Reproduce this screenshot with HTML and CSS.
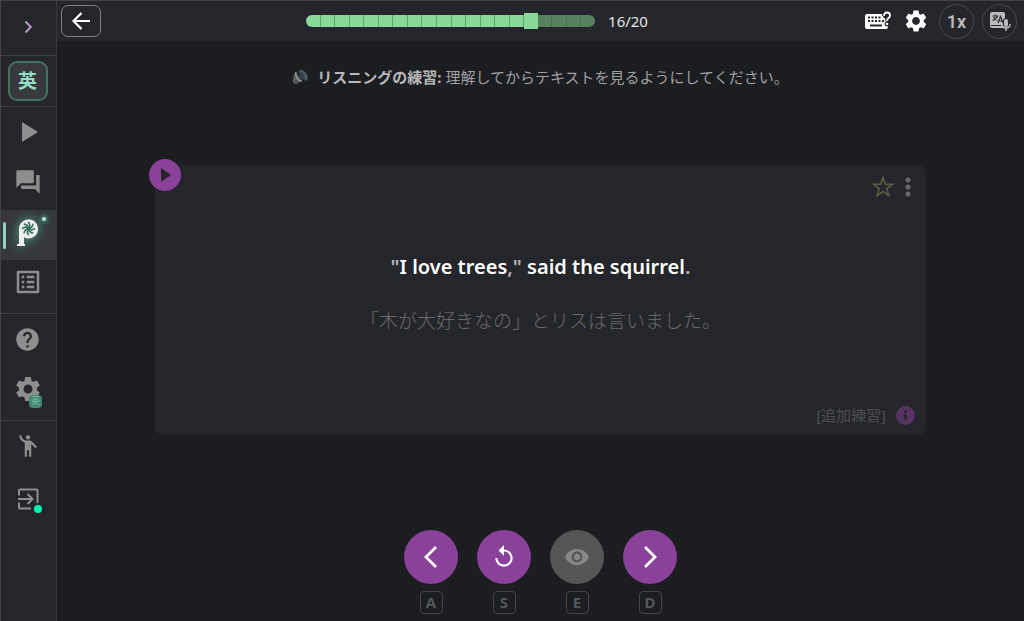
FILE: index.html
```html
<!DOCTYPE html>
<html lang="ja">
	<head>
		<meta charset="UTF-8" />
		<meta name="viewport" content="width=device-width, initial-scale=1.0" />
		<title>リスニングの練習</title>
		<link rel="stylesheet" href="styles.css">
	</head>
	<body>
		<div class="app">
			<nav class="sidebar">
				<div class="side-group side-toggle">
					<button type="button" class="side-item" aria-label="メニューを開く">
						<svg width="24" height="24" viewBox="0 0 24 24"><path d="M9.500 6.500l5.300 5.500-5.300 5.500" fill="none" stroke="#b79cc4" stroke-width="2" /></svg>
					</button>
				</div>
				<div class="side-group side-lang">
					<button type="button" class="lang-btn">英</button>
				</div>
				<div class="side-group">
					<a href="#play" class="side-item" aria-label="再生">
						<svg width="24" height="24" viewBox="0 0 24 24"><path d="M6 2l16 10L6 22z" /></svg>
					</a>
					<a href="#chat" class="side-item" aria-label="チャット">
						<svg width="28" height="28" viewBox="0 0 24 24"><path d="M21 6h-2v9H6v2c0 .55.45 1 1 1h11l4 4V7c0-.55-.45-1-1-1zm-4 6V3c0-.55-.45-1-1-1H3c-.55 0-1 .45-1 1v14l4-4h10c.55 0 1-.45 1-1z" /></svg>
					</a>
					<a href="#practice" class="side-item active" aria-label="練習">
						<svg class="logo" width="32" height="32" viewBox="0 0 32 32">
							<path d="M7 13a9.500 9.500 0 1 1 5 8.300V28h1v2H5v-2h2z" fill="#eee" />
							<g fill="none" stroke="#37705f" stroke-width="1.600" stroke-linecap="round">
								<path id="blade" d="M16.500 12.500q2.500-2.500.2-6" />
								<use href="#blade" transform="rotate(45 16.500 12.500)" />
								<use href="#blade" transform="rotate(90 16.500 12.500)" />
								<use href="#blade" transform="rotate(135 16.500 12.500)" />
								<use href="#blade" transform="rotate(180 16.500 12.500)" />
								<use href="#blade" transform="rotate(225 16.500 12.500)" />
								<use href="#blade" transform="rotate(270 16.500 12.500)" />
								<use href="#blade" transform="rotate(315 16.500 12.500)" />
							</g>
						</svg>
						<span class="spark"></span>
					</a>
					<a href="#list" class="side-item" aria-label="リスト">
						<svg width="30" height="30" viewBox="0 0 24 24"><path d="M19 5v14H5V5h14m1.100-2H3.900c-.5 0-.9.4-.9.900v16.200c0 .4.400.9.900.9h16.200c.4 0 .9-.5.900-.9V3.900c0-.5-.5-.9-.9-.9zM11 7h6v2h-6V7zm0 4h6v2h-6v-2zm0 4h6v2h-6zM7 7h2v2H7zm0 4h2v2H7zm0 4h2v2H7z" /></svg>
					</a>
				</div>
				<div class="side-group">
					<a href="#help" class="side-item" aria-label="ヘルプ">
						<svg width="27" height="27" viewBox="0 0 24 24"><path d="M12 2C6.480 2 2 6.480 2 12s4.480 10 10 10 10-4.480 10-10S17.520 2 12 2zm1 17h-2v-2h2v2zm2.070-7.750l-.9.920C13.450 12.900 13 13.500 13 15h-2v-.5c0-1.100.45-2.100 1.170-2.830l1.240-1.260c.37-.36.59-.86.59-1.410 0-1.100-.9-2-2-2s-2 .9-2 2H8c0-2.210 1.790-4 4-4s4 1.790 4 4c0 .88-.36 1.680-.93 2.250z" /></svg>
					</a>
					<a href="#settings" class="side-item" aria-label="設定">
						<svg width="30" height="30" viewBox="0 0 24 24"><path d="M19.140 12.940c.04-.3.060-.61.060-.94 0-.32-.02-.64-.07-.94l2.030-1.580c.18-.14.23-.41.120-.61l-1.920-3.320c-.12-.22-.37-.29-.59-.22l-2.390.96c-.5-.38-1.030-.7-1.620-.94l-.36-2.540c-.04-.24-.24-.41-.48-.41h-3.840c-.24 0-.43.17-.47.410l-.36 2.540c-.59.24-1.130.57-1.620.94l-2.390-.96c-.22-.08-.47 0-.59.220L2.740 8.870c-.12.21-.08.47.120.61l2.030 1.580c-.05.3-.09.63-.09.940s.02.64.070.94l-2.030 1.580c-.18.14-.23.41-.12.610l1.920 3.320c.12.22.37.29.59.22l2.390-.96c.5.38 1.030.7 1.620.94l.36 2.540c.05.24.24.41.480.41h3.840c.24 0 .44-.17.470-.41l.36-2.540c.59-.24 1.130-.56 1.620-.94l2.390.96c.22.08.47 0 .59-.22l1.920-3.320c.12-.22.070-.47-.12-.61l-2.010-1.580zM12 15.600c-1.980 0-3.600-1.620-3.600-3.600s1.620-3.600 3.600-3.600 3.600 1.620 3.600 3.600-1.620 3.600-3.600 3.600z" /></svg>
						<span class="lang-badge">英</span>
					</a>
				</div>
				<div class="side-group side-account">
					<a href="#community" class="side-item" aria-label="コミュニティ">
						<svg width="26" height="26" viewBox="0 0 24 24"><circle cx="12" cy="4" r="2" /><path d="M15.890 8.110C15.500 7.720 14.830 7 13.530 7h-2.540C8.240 6.990 6 4.750 6 2H4c0 3.160 2.110 5.840 5 6.710V22h2v-6h2v6h2V10.050L18.950 14l1.410-1.410z" /></svg>
					</a>
					<a href="#login" class="side-item" aria-label="ログイン">
						<svg width="24" height="24" viewBox="0 0 24 24"><path d="M3 8.500V3.500q0-1 1-1h16.500q1 0 1 1V16M3 15.500v5q0 1 1 1h11M2 12h14M11.500 7l5 5-5 5" fill="none" stroke="#8e8e8e" stroke-width="2" /></svg>
						<span class="status-dot"></span>
					</a>
				</div>
			</nav>
			<main class="main">
				<header class="topbar">
					<button type="button" class="back-btn" aria-label="戻る">
						<svg width="24" height="24" viewBox="0 0 24 24"><path d="M21 12H4.500M12.500 4L4.500 12l8 8" fill="none" stroke="#fff" stroke-width="2.200" /></svg>
					</button>
					<div class="progress-wrap">
						<div class="progress" role="progressbar" aria-label="進捗" aria-valuemin="0" aria-valuemax="20" aria-valuenow="16">
							<span class="done"></span><span class="done"></span><span class="done"></span><span class="done"></span><span class="done"></span>
							<span class="done"></span><span class="done"></span><span class="done"></span><span class="done"></span><span class="done"></span>
							<span class="done"></span><span class="done"></span><span class="done"></span><span class="done"></span><span class="done"></span>
							<span class="current"></span><span></span><span></span><span></span><span></span>
						</div>
						<span class="count">16/20</span>
					</div>
					<div class="tools">
						<button type="button" class="tool-btn" aria-label="キーボードショートカット">
							<svg width="26" height="20" viewBox="0 0 26 20">
								<path d="M2 3h15.500q0 4 3.500 5v3h2v5q0 2-2 2H2q-2 0-2-2V5q0-2 2-2z" fill="#fff" />
								<path d="M3 6.500h2M6.500 6.500h2M10 6.500h2M13.500 6.500h2M3 10h2M6.500 10h2M10 10h2M13.500 10h2M17 10h2M5 14.500h12" stroke="#25262b" stroke-width="1.800" />
								<path d="M19 5q0-3.500 3-3.500t3 3q0 1.500-1.500 2.500T22 10" fill="none" stroke="#25262b" stroke-width="4" />
								<circle cx="22" cy="13" r="2.500" fill="#25262b" />
								<path d="M19 5q0-3.500 3-3.500t3 3q0 1.500-1.500 2.500T22 10" fill="none" stroke="#fff" stroke-width="1.800" />
								<circle cx="22" cy="13" r="1.300" fill="#fff" />
							</svg>
						</button>
						<button type="button" class="tool-btn" aria-label="設定">
							<svg width="26" height="26" viewBox="0 0 24 24"><path fill="#fff" d="M19.140 12.940c.04-.3.060-.61.060-.94 0-.32-.02-.64-.07-.94l2.030-1.580c.18-.14.23-.41.120-.61l-1.920-3.320c-.12-.22-.37-.29-.59-.22l-2.390.96c-.5-.38-1.030-.7-1.620-.94l-.36-2.540c-.04-.24-.24-.41-.48-.41h-3.840c-.24 0-.43.17-.47.410l-.36 2.540c-.59.24-1.130.57-1.620.94l-2.390-.96c-.22-.08-.47 0-.59.220L2.740 8.870c-.12.21-.08.47.120.61l2.030 1.580c-.05.3-.09.63-.09.940s.02.64.070.94l-2.030 1.580c-.18.14-.23.41-.12.610l1.920 3.320c.12.22.37.29.59.22l2.390-.96c.5.38 1.030.7 1.620.94l.36 2.540c.05.24.24.41.480.41h3.840c.24 0 .44-.17.470-.41l.36-2.540c.59-.24 1.130-.56 1.620-.94l2.390.96c.22.08.47 0 .59-.22l1.920-3.320c.12-.22.070-.47-.12-.61l-2.010-1.580zM12 15.600c-1.980 0-3.600-1.620-3.600-3.600s1.620-3.600 3.600-3.600 3.600 1.620 3.600 3.600-1.620 3.600-3.600 3.600z" /></svg>
						</button>
						<button type="button" class="round-btn">1x</button>
						<button type="button" class="round-btn" aria-label="翻訳と音声">
							<svg width="22" height="22" viewBox="0 0 22 22">
								<path d="M3 2h11q2 0 2 2v14H3q-2 0-2-2V4q0-2 2-2z" fill="#bbb" />
								<path d="M3.500 6h6M6.500 4.500V6M8.500 6q-1 3-5 4.500M4.500 7q1.500 2.500 4 3.500M9 13l2.500-6.500L14 13M10 11h3M2 15.500h11" fill="none" stroke="#2a2b30" stroke-width="1.200" />
								<rect x="14" y="8" width="6" height="10" rx="3" fill="#25262b" />
								<rect x="15" y="9" width="4" height="8" rx="2" fill="#bbb" />
								<path d="M13 14q0 4 4 4t4-4M17 18v3" fill="none" stroke="#bbb" stroke-width="1.500" />
							</svg>
						</button>
					</div>
				</header>
				<p class="hint">
					<svg width="16" height="16" viewBox="0 0 16 16">
						<path d="M6 2q5-2 8 2t1 8q-3 0-6-3z" fill="#34434b" />
						<path d="M7 2q6 0 7 9M9 1q6 2 6 9" fill="none" stroke="#4f6873" />
						<path d="M1 8q0-3 3-5l6 8q-3 3-7 2-2-2-2-5z" fill="#4d5356" />
						<path d="M4 3q-1 3 1 6t5 3" fill="none" stroke="#9a9fa2" stroke-width="1.400" />
						<circle cx="4" cy="12" r="2.500" fill="none" stroke="#777c80" />
					</svg>
					<span><strong>リスニングの練習:</strong> 理解してからテキストを見るようにしてください。</span>
				</p>
				<section class="card">
					<button type="button" class="play-btn" aria-label="再生">
						<svg width="12" height="16" viewBox="0 0 12 16"><path d="M1 1l10 7-10 7z" fill="#25262b" /></svg>
					</button>
					<div class="card-top">
						<button type="button" class="icon-btn" aria-label="お気に入り">
							<svg width="24" height="24" viewBox="0 0 24 24"><path d="M12 2.500l2.300 6.800h7.200l-5.800 4.300 2.200 7-5.900-4.200-5.900 4.200 2.200-7-5.800-4.300h7.200z" fill="none" stroke="#5e5b45" stroke-width="1.600" /></svg>
						</button>
						<button type="button" class="icon-btn" aria-label="その他">
							<svg width="6" height="20" viewBox="0 0 6 20" fill="#67686c"><circle cx="3" cy="3" r="2.500" /><circle cx="3" cy="10" r="2.500" /><circle cx="3" cy="17" r="2.500" /></svg>
						</button>
					</div>
					<p class="sentence" lang="en"><span>"</span>I love trees<span>,"</span> said the squirrel<span>.</span></p>
					<p class="translation">「木が大好きなの」とリスは言いました。</p>
					<div class="card-bottom">
						<span>[追加練習]</span>
						<button type="button" class="icon-btn" aria-label="情報">
							<svg width="19" height="19" viewBox="0 0 20 20"><circle cx="10" cy="10" r="10" fill="#553363" /><path d="M9 5h2v2H9zM8 9h3v5H9v-4H8zM8 14h4" fill="#25262b" stroke="#25262b" stroke-width=".5" /></svg>
						</button>
					</div>
				</section>
				<div class="controls">
					<div class="control">
						<button type="button" class="circle-btn" aria-label="前へ">
							<svg width="26" height="26" viewBox="0 0 26 26"><path d="M18 3L8 13l10 10" fill="none" stroke="#fff" stroke-width="2.800" /></svg>
						</button>
						<kbd>A</kbd>
					</div>
					<div class="control">
						<button type="button" class="circle-btn" aria-label="もう一度">
							<svg width="26" height="26" viewBox="0 0 24 24"><path d="M12 5V1L7 6l5 5V7c3.310 0 6 2.690 6 6s-2.690 6-6 6-6-2.690-6-6H4c0 4.420 3.580 8 8 8s8-3.580 8-8-3.580-8-8-8z" fill="#fff" /></svg>
						</button>
						<kbd>S</kbd>
					</div>
					<div class="control">
						<button type="button" class="circle-btn muted" aria-label="表示">
							<svg width="26" height="26" viewBox="0 0 24 24"><path d="M12 4.500C7 4.500 2.730 7.610 1 12c1.730 4.390 6 7.500 11 7.500s9.270-3.110 11-7.500c-1.730-4.390-6-7.500-11-7.500zM12 17c-2.760 0-5-2.240-5-5s2.240-5 5-5 5 2.240 5 5-2.240 5-5 5zm0-8c-1.660 0-3 1.340-3 3s1.340 3 3 3 3-1.340 3-3-1.340-3-3-3z" fill="#888" /></svg>
						</button>
						<kbd>E</kbd>
					</div>
					<div class="control">
						<button type="button" class="circle-btn" aria-label="次へ">
							<svg width="26" height="26" viewBox="0 0 26 26"><path d="M8 3l10 10L8 23" fill="none" stroke="#fff" stroke-width="2.800" /></svg>
						</button>
						<kbd>D</kbd>
					</div>
				</div>
			</main>
		</div>
	</body>
</html>
```
FILE: styles.css
```css
* {
	box-sizing: border-box;
}
body {
	margin: 0;
	background: #1c1d20;
	color: #aaa;
	font-family: "Noto Sans", "Noto Sans CJK JP", sans-serif;
}
button {
	padding: 0;
	border: none;
	background: none;
	color: inherit;
	font-family: inherit;
	cursor: pointer;
}
p {
	margin: 0;
}
svg {
	display: block;
}
.app {
	display: flex;
	min-height: 100vh;
	border-top: 1px solid #434447;
}
.sidebar {
	flex: none;
	width: 57px;
	background: #25262b;
	border-left: 1px solid #434447;
	border-right: 1px solid #38393d;
}
.side-group {
	padding: 3px 0;
	border-bottom: 1px solid #3d3e42;
}
.side-group:last-child {
	border-bottom: none;
}
.side-toggle {
	padding: 4px 0 0;
}
.side-lang {
	display: flex;
	justify-content: center;
	padding: 5px 2px 5px 0;
}
.side-account {
	display: grid;
	gap: 3px;
}
.side-item {
	position: relative;
	display: flex;
	align-items: center;
	justify-content: center;
	width: 100%;
	height: 50px;
	padding: 0 2px 6px 0;
	fill: #8e8e8e;
}
.side-item.active {
	background: #36373c;
}
.side-item.active::before {
	content: "";
	position: absolute;
	left: 2px;
	top: 12px;
	width: 3px;
	height: 27px;
	border-radius: 2px;
	background: #8fd3c2;
}
.logo {
	filter: drop-shadow(0 0 6px #4da88c);
}
.spark {
	position: absolute;
	top: 7px;
	right: 10px;
	width: 4px;
	height: 4px;
	border-radius: 50%;
	background: #a5eed6;
	box-shadow: 0 0 4px 1px #4da88c;
}
.lang-btn {
	width: 40px;
	height: 40px;
	border: 2px solid #44705f;
	border-radius: 9px;
	background: #38393e;
	color: #93dcc4;
	font-size: 19px;
	font-weight: 700;
	line-height: 24px;
}
.lang-badge {
	position: absolute;
	right: 14px;
	bottom: 9px;
	width: 13px;
	height: 13px;
	border-radius: 4px;
	background: #438873;
	color: #83bda9;
	font-size: 9px;
	line-height: 12px;
	text-align: center;
}
.status-dot {
	position: absolute;
	right: 14px;
	bottom: 14px;
	width: 8px;
	height: 8px;
	border-radius: 50%;
	background: #00f5b0;
}
.main {
	display: flex;
	flex: 1;
	flex-direction: column;
	min-width: 0;
}
.topbar {
	display: grid;
	grid-template-columns: 1fr auto 1fr;
	align-items: center;
	height: 40px;
	padding: 0 7px 0 4px;
	background: #25262b;
}
.back-btn {
	display: flex;
	align-items: center;
	justify-content: center;
	width: 40px;
	height: 32px;
	border: 1px solid #808084;
	border-radius: 7px;
}
.progress-wrap {
	display: flex;
	align-items: center;
	gap: 13px;
	margin-right: 124px;
}
.progress {
	display: flex;
	align-items: center;
	width: 289px;
}
.progress span {
	flex: 1;
	height: 12px;
	border-right: 1px solid #477253;
	background: #56805f;
}
.progress .done {
	border-right-color: #61a372;
	background: #8ad998;
}
.progress .current {
	height: 16px;
	border: none;
	background: #8ad998;
}
.progress span:first-child {
	border-radius: 6px 0 0 6px;
}
.progress span:last-child {
	border-right: none;
	border-radius: 0 6px 6px 0;
}
.count {
	color: #e4e4e4;
	font-size: 15px;
	line-height: 20px;
}
.tools {
	display: flex;
	align-items: center;
	justify-content: flex-end;
	gap: 8px;
}
.tool-btn {
	padding: 0 2px;
}
.round-btn {
	display: flex;
	align-items: center;
	justify-content: center;
	width: 35px;
	height: 35px;
	border: 1px solid #48494d;
	border-radius: 50%;
	color: #bbb;
	font-family: Roboto, sans-serif;
	font-size: 18px;
	font-weight: 600;
}
.hint {
	display: flex;
	align-items: center;
	justify-content: center;
	gap: 9px;
	padding: 24px 0 26px;
	color: #a0a0a2;
	font-size: 15px;
	line-height: 24px;
}
.hint strong {
	color: #b8b8ba;
}
.card {
	position: relative;
	margin: 50px 98px 24px;
	padding: 10px 10px 8px;
	border-radius: 8px;
	background: #25262b;
	text-align: center;
}
.play-btn {
	position: absolute;
	left: -6px;
	top: -6px;
	display: flex;
	align-items: center;
	justify-content: center;
	width: 32px;
	height: 32px;
	padding-left: 2px;
	border-radius: 50%;
	background: #894199;
}
.card-top,
.card-bottom {
	display: flex;
	align-items: center;
	justify-content: flex-end;
	gap: 10px;
	height: 24px;
}
.card-top {
	padding-right: 5px;
}
.sentence {
	margin-top: 52px;
	color: #fff;
	font-size: 20px;
	font-weight: 600;
	line-height: 32px;
}
.sentence span {
	color: #b4b4b6;
}
.translation {
	margin: 22px 0 66px;
	color: #68696c;
	font-size: 19px;
	font-weight: 300;
	line-height: 32px;
}
.card-bottom {
	padding-right: 1px;
	color: #4d4e52;
	font-size: 15px;
	line-height: 24px;
}
.controls {
	display: flex;
	justify-content: center;
	gap: 19px;
	margin-top: auto;
	padding-bottom: 7px;
}
.control {
	display: flex;
	flex-direction: column;
	align-items: center;
	gap: 7px;
}
.circle-btn {
	display: flex;
	align-items: center;
	justify-content: center;
	width: 54px;
	height: 54px;
	border-radius: 50%;
	background: #894199;
}
.circle-btn.muted {
	background: #555;
}
kbd {
	width: 23px;
	height: 23px;
	border: 1px solid #434447;
	border-radius: 4px;
	color: #55565a;
	font-family: inherit;
	font-size: 15px;
	font-weight: 700;
	line-height: 21px;
	text-align: center;
}
```
